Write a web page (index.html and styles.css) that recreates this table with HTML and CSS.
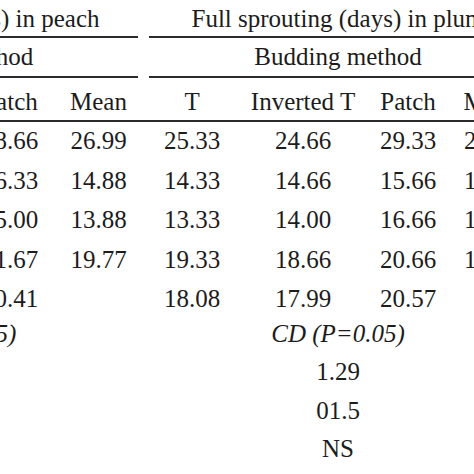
FILE: index.html
```html
<!DOCTYPE html>
<html lang="en">
<head>
    <meta charset="UTF-8">
    <meta name="viewport" content="width=device-width, initial-scale=1.0">
    <title>Full sprouting (days) by budding method</title>
    <link rel="stylesheet" href="styles.css">
</head>
<body>
    <div class="frame">
        <table class="sprout-table">
            <colgroup>
                <col class="w-peach-t">
                <col class="w-peach-inv">
                <col class="w-peach-patch">
                <col class="w-peach-mean">
                <col class="w-plum-t">
                <col class="w-plum-inv">
                <col class="w-plum-patch">
                <col class="w-plum-mean">
            </colgroup>
            <thead>
                <tr class="row-title">
                    <th colspan="4" class="group group-left"><div>Full sprouting (days) in peach</div></th>
                    <th colspan="4" class="group group-right"><div>Full sprouting (days) in plum</div></th>
                </tr>
                <tr class="row-sub">
                    <th colspan="4" class="group group-left"><div>Budding method</div></th>
                    <th colspan="4" class="group group-right"><div>Budding method</div></th>
                </tr>
                <tr class="row-head">
                    <th>T</th>
                    <th>Inverted T</th>
                    <th>Patch</th>
                    <th>Mean</th>
                    <th>T</th>
                    <th>Inverted T</th>
                    <th>Patch</th>
                    <th>Mean</th>
                </tr>
            </thead>
            <tbody>
                <tr class="data">
                    <td></td><td></td><td>28.66</td><td>26.99</td>
                    <td>25.33</td><td>24.66</td><td>29.33</td><td>26.44</td>
                </tr>
                <tr class="data">
                    <td></td><td></td><td>16.33</td><td>14.88</td>
                    <td>14.33</td><td>14.66</td><td>15.66</td><td>14.88</td>
                </tr>
                <tr class="data">
                    <td></td><td></td><td>15.00</td><td>13.88</td>
                    <td>13.33</td><td>14.00</td><td>16.66</td><td>14.66</td>
                </tr>
                <tr class="data">
                    <td></td><td></td><td>21.67</td><td>19.77</td>
                    <td>19.33</td><td>18.66</td><td>20.66</td><td>19.55</td>
                </tr>
                <tr class="data">
                    <td></td><td></td><td>20.41</td><td></td>
                    <td>18.08</td><td>17.99</td><td>20.57</td><td></td>
                </tr>
            </tbody>
            <tbody>
                <tr class="cd-title">
                    <td colspan="4">CD (P=0.05)</td>
                    <td colspan="4">CD (P=0.05)</td>
                </tr>
                <tr class="cd-value">
                    <td colspan="4"></td>
                    <td colspan="4">1.29</td>
                </tr>
                <tr class="cd-value">
                    <td colspan="4"></td>
                    <td colspan="4">01.5</td>
                </tr>
                <tr class="cd-value">
                    <td colspan="4"></td>
                    <td colspan="4">NS</td>
                </tr>
            </tbody>
        </table>
    </div>
</body>
</html>
```

FILE: styles.css
```css
body {
    margin: 0;
    background: #fff;
    color: #1c1c1c;
    font-family: "Liberation Serif", "Times New Roman", serif;
    font-size: 25px;
}

/* the picture is a crop of a wider table */
.frame {
    width: 474px;
    height: 474px;
    overflow: hidden;
}

.sprout-table {
    margin-left: -244px;
    width: 777px;
    table-layout: fixed;
    border-collapse: separate;
    border-spacing: 0;
}

.w-peach-t { width: 86px; }
.w-peach-inv { width: 124px; }
.w-peach-patch { width: 88px; }
.w-peach-mean { width: 89px; }
.w-plum-t { width: 98px; }
.w-plum-inv { width: 124px; }
.w-plum-patch { width: 86px; }
.w-plum-mean { width: 82px; }

th, td {
    padding: 0;
    font-weight: normal;
    text-align: center;
    line-height: 28px;
    white-space: nowrap;
}

.group > div {
    padding: 5px 0 3px;
    border-bottom: 2px solid #2b2b2b;
}

.group-left > div {
    margin: 0 5px;
}

.group-right > div {
    margin: 0 6px;
}

.row-sub .group > div {
    padding-bottom: 5px;
}

.row-head th {
    padding: 10px 0 4px;
    border-bottom: 2px solid #2b2b2b;
}

.data td {
    padding: 5px 0 6.5px;
}

.cd-title td {
    padding: 0 0 5px;
    font-style: italic;
}

.cd-value td {
    padding: 5.5px 0 5px;
}
```
